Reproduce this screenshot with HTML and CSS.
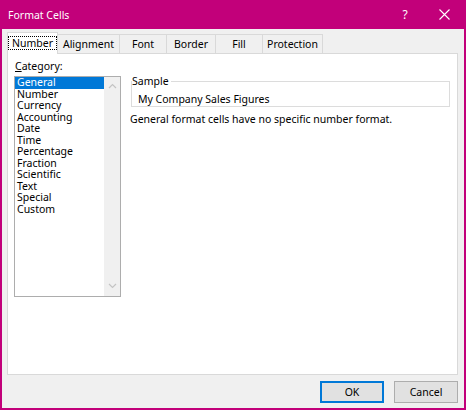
FILE: index.html
```html
<!DOCTYPE html>
<html>
<head>
<meta charset="utf-8">
<link rel="stylesheet" href="styles.css">
<title>Format Cells</title>
</head>
<body>
<div class="window">
	<div class="titlebar">
		<span class="title">Format Cells</span>
		<span class="help">?</span>
		<span class="close">
			<svg width="11" height="11" viewBox="0 0 11 11"><path d="M0.5 0.5 L10.5 10.5 M10.5 0.5 L0.5 10.5" stroke="#fff" stroke-width="1.1" fill="none"/></svg>
		</span>
	</div>
	<div class="content">
		<div class="tabs">
			<div class="tab active" style="width:51px"><span class="focus">Number</span></div>
			<div class="tab" style="width:62px">Alignment</div>
			<div class="tab" style="width:47px">Font</div>
			<div class="tab" style="width:49px">Border</div>
			<div class="tab" style="width:47px">Fill</div>
			<div class="tab" style="width:60px">Protection</div>
		</div>
		<div class="panel">
			<div class="leftcol">
				<div class="catlabel"><u>C</u>ategory:</div>
				<div class="listbox">
					<ul class="items">
						<li class="selected">General</li>
						<li>Number</li>
						<li>Currency</li>
						<li>Accounting</li>
						<li>Date</li>
						<li>Time</li>
						<li>Percentage</li>
						<li>Fraction</li>
						<li>Scientific</li>
						<li>Text</li>
						<li>Special</li>
						<li>Custom</li>
					</ul>
					<div class="scrollbar">
						<svg width="9" height="6" viewBox="0 0 9 6"><path d="M1 5 L4.5 1.5 L8 5" stroke="#c4c4c4" stroke-width="1.2" fill="none"/></svg>
						<svg width="9" height="6" viewBox="0 0 9 6"><path d="M1 1 L4.5 4.5 L8 1" stroke="#c4c4c4" stroke-width="1.2" fill="none"/></svg>
					</div>
				</div>
			</div>
			<div class="rightcol">
				<div class="sample">
					<span class="legend">Sample</span>
					<div class="sampletext">My Company Sales Figures</div>
				</div>
				<div class="desc">General format cells have no specific number format.</div>
			</div>
		</div>
		<div class="buttons">
			<button type="button" class="btn default">OK</button>
			<button type="button" class="btn">Cancel</button>
		</div>
	</div>
</div>
</body>
</html>
```

FILE: styles.css
```css
html, body {
	margin: 0;
	padding: 0;
}
body {
	font-family: "Noto Sans", "Liberation Sans", sans-serif;
	font-size: 10.5px;
	color: #000;
	background-color: #c2007a;
}
div.window {
	width: 466px;
	height: 410px;
	box-sizing: border-box;
	border: 2px solid #c2007a;
	border-top: 0;
	display: flex;
	flex-direction: column;
	background-color: #f0f0f0;
}
div.titlebar {
	height: 29px;
	margin: 0 -2px;
	background-color: #c2007a;
	color: #fff;
	display: flex;
	align-items: center;
	font-size: 10.5px;
}
span.title {
	flex: 1;
	padding-left: 8px;
}
span.help {
	width: 20px;
	text-align: center;
	font-size: 12px;
	margin-right: 9px;
}
span.close {
	width: 40px;
	display: flex;
	justify-content: center;
	padding-right: 2px;
}
div.content {
	flex: 1;
	display: flex;
	flex-direction: column;
	padding: 3px 6px 0 5px;
}
div.tabs {
	display: flex;
	height: 21px;
	align-items: flex-end;
}
div.tab {
	height: 19px;
	box-sizing: border-box;
	border: 1px solid #d9d9d9;
	border-bottom: 0;
	border-left: 0;
	display: flex;
	align-items: center;
	justify-content: center;
	background-color: #f0f0f0;
	padding-bottom: 1px;
}
div.tab.active {
	height: 22px;
	background-color: #fff;
	border-left: 1px solid #d9d9d9;
	margin-bottom: -1px;
	position: relative;
	z-index: 1;
	padding-bottom: 2px;
}
span.focus {
	border: 1px dotted #000;
	padding: 0 3px;
	line-height: 12px;
}
div.panel {
	height: 322px;
	box-sizing: border-box;
	background-color: #fff;
	border: 1px solid #d9d9d9;
	display: flex;
	padding: 6px 7px 0 6px;
	gap: 9px;
}
div.leftcol {
	width: 107px;
	display: flex;
	flex-direction: column;
}
div.catlabel {
	height: 16px;
	line-height: 12px;
	padding-left: 1px;
}
div.listbox {
	height: 221px;
	box-sizing: border-box;
	border: 1px solid #adadad;
	display: flex;
}
ul.items {
	list-style: none;
	margin: 0;
	padding: 0;
	flex: 1;
}
ul.items li {
	height: 11.5px;
	line-height: 11.5px;
	padding-left: 2px;
	white-space: nowrap;
}
ul.items li.selected {
	background-color: #0078d7;
	color: #fff;
}
div.scrollbar {
	width: 16px;
	background-color: #f0f0f0;
	display: flex;
	flex-direction: column;
	justify-content: space-between;
	align-items: center;
	padding: 6px 0 7px;
}
div.rightcol {
	flex: 1;
	padding-top: 21px;
	padding-left: 1px;
}
div.sample {
	position: relative;
	height: 26px;
	box-sizing: border-box;
	border: 1px solid #dcdcdc;
	padding: 11px 0 0 6px;
}
span.legend {
	position: absolute;
	left: 0;
	top: -7px;
	background-color: #fff;
	padding-right: 2px;
	line-height: 12px;
}
div.sampletext {
	line-height: 12px;
}
div.desc {
	margin-top: 5px;
	margin-left: -1px;
	line-height: 14px;
}
div.buttons {
	flex: 1;
	display: flex;
	justify-content: flex-end;
	align-items: center;
	gap: 10px;
}
button.btn {
	width: 64px;
	height: 22px;
	font-family: inherit;
	font-size: 10.5px;
	color: #000;
	background-color: #e1e1e1;
	border: 1px solid #adadad;
	padding: 0;
}
button.btn.default {
	border: 2px solid #0078d7;
}
```
